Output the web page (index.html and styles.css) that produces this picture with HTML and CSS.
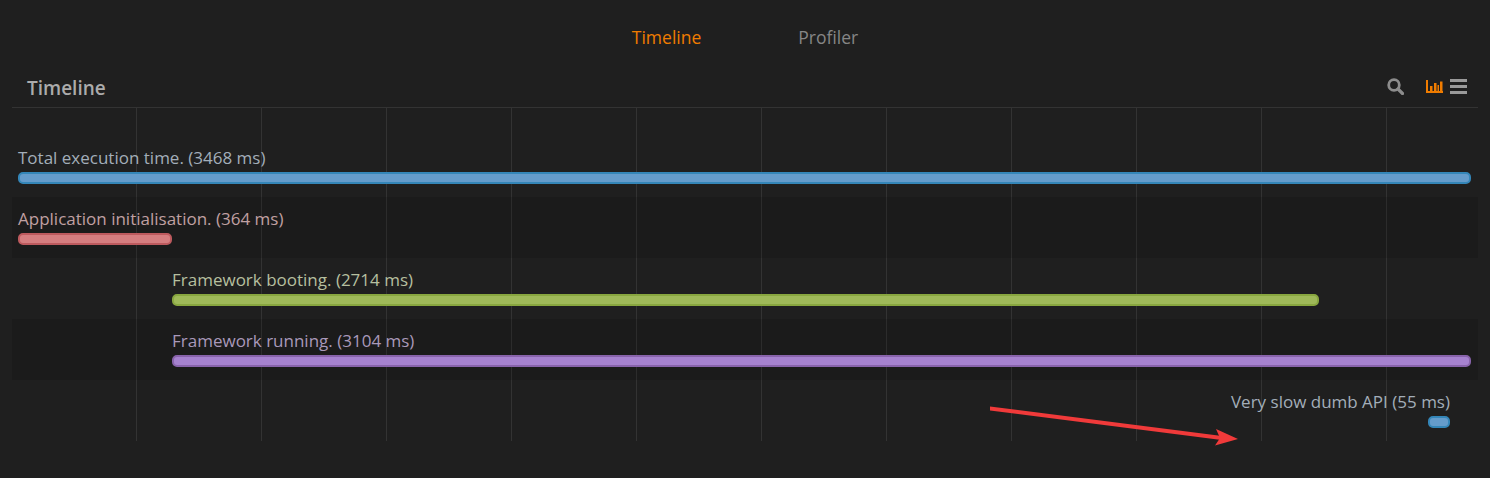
FILE: index.html
```html
<!DOCTYPE html>
<html lang="en">
<head>
    <meta charset="UTF-8">
    <meta name="viewport" content="width=device-width, initial-scale=1.0">
    <title>Timeline</title>
    <link rel="stylesheet" href="styles.css">
</head>
<body>
    <div class="tabs">
        <a class="tab active" href="#">Timeline</a>
        <a class="tab" href="#">Profiler</a>
    </div>

    <div class="panel">
        <div class="panel-head">
            <h2>Timeline</h2>
            <div class="tools">
                <svg class="icon-search" width="17" height="17" viewBox="0 0 17 17">
                    <circle cx="7" cy="7" r="5.3" fill="none" stroke="#8c8c8c" stroke-width="2.8"/>
                    <path d="M11 11 L15.5 15.5" stroke="#8c8c8c" stroke-width="3.2" stroke-linecap="round"/>
                </svg>
                <svg class="icon-chart" width="17" height="13" viewBox="0 0 17 13">
                    <path d="M1 0 V12 H17" fill="none" stroke="#f07c00" stroke-width="2"/>
                    <path d="M4 6 h2.5 v5 h-2.5 z M8 3 h2.5 v8 h-2.5 z M11.5 5 h1.5 v6 h-1.5 z M14 1.5 h2.5 v9.5 h-2.5 z" fill="#f07c00"/>
                </svg>
                <svg class="icon-menu" width="17" height="15" viewBox="0 0 17 15">
                    <path d="M0 0 h17 v3 h-17 z M0 6 h17 v3 h-17 z M0 12 h17 v3 h-17 z" fill="#9a9a9a"/>
                </svg>
            </div>
        </div>

        <div class="timeline">
            <div class="row">
                <div class="item" style="margin-left: 6px; width: 1453px">
                    <span class="label blue">Total execution time. (3468 ms)</span>
                    <div class="bar blue"></div>
                </div>
            </div>
            <div class="row odd">
                <div class="item" style="margin-left: 6px; width: 154px">
                    <span class="label red">Application initialisation. (364 ms)</span>
                    <div class="bar red"></div>
                </div>
            </div>
            <div class="row">
                <div class="item" style="margin-left: 160px; width: 1147px">
                    <span class="label green">Framework booting. (2714 ms)</span>
                    <div class="bar green"></div>
                </div>
            </div>
            <div class="row odd">
                <div class="item" style="margin-left: 160px; width: 1299px">
                    <span class="label purple">Framework running. (3104 ms)</span>
                    <div class="bar purple"></div>
                </div>
            </div>
            <div class="row last">
                <div class="item end" style="margin-left: 1416px; width: 22px">
                    <span class="label blue">Very slow dumb API (55 ms)</span>
                    <div class="bar blue"></div>
                </div>
            </div>
        </div>
    </div>

    <svg class="arrow" width="260" height="50" viewBox="0 0 260 50">
        <path d="M0 1.5 L232 31 L231.5 35 L0 5.5 Z" fill="#f03a3a"/>
        <path d="M248 34 L226 24 L230 33 L225 40.5 Z" fill="#f03a3a"/>
    </svg>
</body>
</html>
```

FILE: styles.css
```css
body {
    margin: 0;
    height: 478px;
    overflow: hidden;
    position: relative;
    background-color: #1f1f1f;
    font-family: "Open Sans", "Noto Sans", Arial, sans-serif;
}
.tabs {
    display: flex;
    justify-content: center;
    gap: 97px;
    height: 74px;
    box-sizing: border-box;
    padding: 25px 0 0 0;
}
.tab {
    color: #868686;
    font-size: 17.5px;
    line-height: 24px;
    text-decoration: none;
}
.tab.active {
    color: #f07c00;
}
.panel {
    margin: 0 12px;
}
.panel-head {
    display: flex;
    justify-content: space-between;
    align-items: center;
    height: 34px;
    box-sizing: border-box;
    padding: 0 11px 5px 15px;
    border-bottom: 1px solid #333;
}
.panel-head h2 {
    margin: 0;
    color: #ababab;
    font-size: 19px;
    font-weight: 600;
    line-height: 24px;
}
.tools {
    display: flex;
    align-items: center;
    padding-bottom: 4px;
}
.icon-chart {
    margin-left: 22px;
}
.icon-menu {
    margin-left: 7px;
}
.timeline {
    height: 333px;
    box-sizing: border-box;
    padding-top: 28px;
    background-image: linear-gradient(to right, #333 1px, transparent 1px);
    background-size: 125px 100%;
    background-position: 124px 0;
}
.row {
    height: 61px;
    box-sizing: border-box;
    padding-top: 11px;
}
.row.odd {
    background-color: rgba(0, 0, 0, 0.12);
}
.item {
    display: flex;
    flex-direction: column;
}
.item.end {
    align-items: flex-end;
}
.label {
    white-space: nowrap;
    font-size: 17px;
    line-height: 22px;
}
.label.blue {
    color: #a3aeb9;
}
.label.red {
    color: #c0a0a2;
}
.label.green {
    color: #b6bf9f;
}
.label.purple {
    color: #a999ba;
}
.bar {
    width: 100%;
    height: 12px;
    margin-top: 3px;
    box-sizing: border-box;
    border: 2px solid;
    border-radius: 5px;
}
.bar.blue {
    background-color: #659ccb;
    border-color: #3486b8;
}
.bar.red {
    background-color: #d57e80;
    border-color: #bd5a5e;
}
.bar.green {
    background-color: #9fb959;
    border-color: #88a63f;
}
.bar.purple {
    background-color: #a682cf;
    border-color: #8863ab;
}
.arrow {
    position: absolute;
    left: 990px;
    top: 405px;
}
```
